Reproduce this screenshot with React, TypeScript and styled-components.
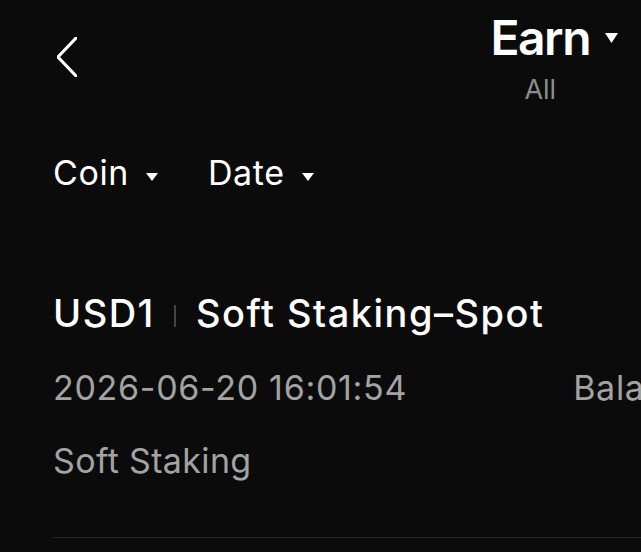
import React from "react";
import styled, { createGlobalStyle } from "styled-components";

const Global = createGlobalStyle`
  html, body {
    margin: 0;
    padding: 0;
    background: #0b0b0b;
  }
  body {
    font-family: Inter, "Noto Sans", sans-serif;
    color: #ffffff;
    overflow: hidden;
  }
`;

const Page = styled.div`
  width: 641px;
  height: 552px;
  overflow: hidden;
  background: #0b0b0b;
  padding: 14px 23px 0 53px;
  box-sizing: border-box;
`;

const Header = styled.header`
  display: flex;
  justify-content: space-between;
  align-items: flex-start;
`;

const BackButton = styled.button`
  background: none;
  border: 0;
  padding: 0;
  margin: 23px 0 0 4px;
  width: 20px;
  height: 40px;
  display: flex;
  cursor: pointer;
`;

const TitleGroup = styled.div`
  display: flex;
  align-items: flex-start;
  gap: 15px;
`;

const TitleColumn = styled.div`
  display: flex;
  flex-direction: column;
  align-items: center;
`;

const Title = styled.div`
  font-size: 48px;
  line-height: 48px;
  font-weight: 600;
  letter-spacing: -1.5px;
  color: #ffffff;
`;

const Subtitle = styled.div`
  margin-top: 14px;
  font-size: 27px;
  line-height: 27px;
  color: #8c8c8c;
`;

const Caret = styled.svg<{ $top: number }>`
  display: block;
  margin-top: ${(p) => p.$top}px;
  flex: none;
`;

const Filters = styled.div`
  display: flex;
  align-items: flex-start;
  gap: 50px;
  margin-top: 53px;
`;

const Filter = styled.div`
  display: flex;
  align-items: flex-start;
  gap: 17px;
  font-size: 34px;
  line-height: 34px;
  color: #ffffff;
  letter-spacing: 0.6px;
`;

const Record = styled.section`
  margin-top: 104px;
`;

const RecordTitle = styled.div`
  display: flex;
  align-items: center;
  font-size: 38px;
  line-height: 38px;
  font-weight: 500;
  color: #ffffff;
  white-space: nowrap;
  letter-spacing: 1.5px;
`;

const Separator = styled.span`
  display: inline-block;
  width: 2px;
  height: 22px;
  background: #454545;
  margin: 6px 20px 0 19px;
`;

const MetaRow = styled.div`
  display: flex;
  gap: 166px;
  margin-top: 39px;
  font-size: 34px;
  line-height: 34px;
  color: #a3a3a3;
  white-space: nowrap;
  letter-spacing: 0.7px;
`;

const MetaText = styled.div<{ $gap?: number }>`
  margin-top: ${(p) => p.$gap ?? 0}px;
  font-size: 34px;
  line-height: 34px;
  color: #a3a3a3;
  white-space: nowrap;
  letter-spacing: 0.35px;
`;

const Divider = styled.div`
  height: 1px;
  background: #262626;
  margin: 59px -23px 0 -1px;
`;

const Tri = ({ w, h, top }: { w: number; h: number; top: number }) => (
  <Caret $top={top} width={w} height={h} viewBox={`0 0 ${w} ${h}`}>
    <polygon points={`0,0 ${w},0 ${w / 2},${h}`} fill="#ffffff" />
  </Caret>
);

export default function App() {
  return (
    <>
      <Global />
      <Page>
        <Header>
          <BackButton aria-label="Back">
            <svg width="20" height="40" viewBox="0 0 20 40">
              <polyline
                points="19,1 1,20 19,39"
                fill="none"
                stroke="#ffffff"
                strokeWidth="3"
                strokeLinecap="round"
                strokeLinejoin="round"
              />
            </svg>
          </BackButton>
          <TitleGroup>
            <TitleColumn>
              <Title>Earn</Title>
              <Subtitle>All</Subtitle>
            </TitleColumn>
            <Tri w={13} h={10} top={19} />
          </TitleGroup>
        </Header>

        <Filters>
          <Filter>
            Coin
            <Tri w={12} h={8} top={17} />
          </Filter>
          <Filter>
            Date
            <Tri w={12} h={8} top={17} />
          </Filter>
        </Filters>

        <Record>
          <RecordTitle>
            USD1
            <Separator />
            Soft Staking–Spot
          </RecordTitle>
          <MetaRow>
            <span>2026-06-20 16:01:54</span>
            <span>Balance</span>
          </MetaRow>
          <MetaText $gap={39}>Soft Staking</MetaText>
        </Record>
        <Divider />
      </Page>
    </>
  );
}
